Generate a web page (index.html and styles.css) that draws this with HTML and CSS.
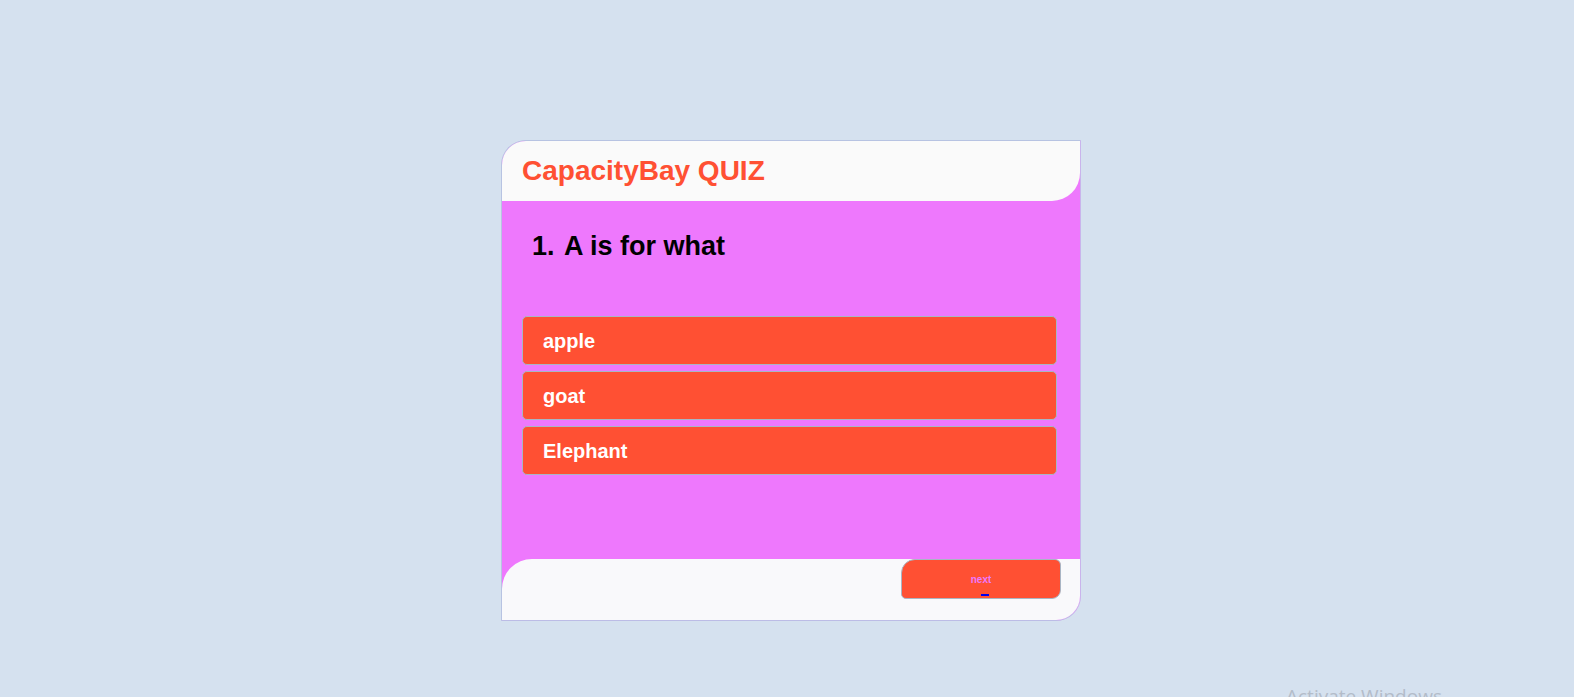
FILE: index.html
```
<!DOCTYPE html>
<html lang="en">
<head>
<meta charset="utf-8">
<title>CapacityBay QUIZ</title>
<link rel="stylesheet" href="styles.css">
</head>
<body>
<div class="quiz">
  <header class="quiz-header">
    <h1 class="quiz-title">CapacityBay QUIZ</h1>
  </header>
  <main class="quiz-body">
    <h2 class="question"><span class="q-num">1.</span> A is for what</h2>
    <div class="options">
      <button class="option">apple</button>
      <button class="option">goat</button>
      <button class="option">Elephant</button>
    </div>
  </main>
  <footer class="quiz-footer">
    <button class="next-btn"><span class="next-label">next</span><span class="next-link"></span></button>
  </footer>
</div>
<div class="watermark">Activate Windows</div>
</body>
</html>
```
FILE: styles.css
```
html, body {
  margin: 0;
  padding: 0;
  height: 697px;
  overflow: hidden;
}
body {
  background: #d5e1ef;
  font-family: "Liberation Sans", Arial, sans-serif;
}
.quiz {
  width: 578px;
  margin: 140px 0 0 501px;
  background: #ee78fd;
  border: 1px solid #b7c3e2;
  border-right-color: #c9b4ec;
  border-bottom-color: #bcbce6;
  border-radius: 25px 0 25px 0;
  overflow: hidden;
  display: flex;
  flex-direction: column;
}
.quiz-header {
  height: 60px;
  background: #fafafa;
  border-bottom-right-radius: 28px;
  display: flex;
  align-items: center;
  padding-left: 20px;
}
.quiz-title {
  margin: 0;
  font-size: 28px;
  line-height: 32px;
  font-weight: bold;
  color: #ff5033;
}
.quiz-body {
  height: 358px;
  padding: 30px 23px 0 20px;
  box-sizing: border-box;
}
.question {
  margin: 0 0 54px 10px;
  font-size: 27px;
  line-height: 31px;
  font-weight: bold;
  color: #000;
}
.q-num {
  margin-right: 3px;
}
.options {
  display: flex;
  flex-direction: column;
  gap: 6px;
}
.option {
  height: 49px;
  background: #ff5033;
  border: 1px solid #a9b5c4;
  border-radius: 5px;
  padding: 2px 0 0 20px;
  text-align: left;
  font-family: "Liberation Sans", Arial, sans-serif;
  font-size: 20px;
  font-weight: bold;
  color: #fff;
}
.quiz-footer {
  height: 61px;
  background: #f9f9fb;
  border-top-left-radius: 30px;
  display: flex;
  justify-content: flex-end;
  align-items: flex-start;
  padding-right: 19px;
}
.next-btn {
  width: 160px;
  height: 40px;
  background: #ff5033;
  border: 1px solid #a9b5c4;
  border-radius: 14px 6px 9px 5px;
  padding: 0;
  display: flex;
  flex-direction: column;
  align-items: center;
  font-family: "Liberation Sans", Arial, sans-serif;
}
.next-label {
  margin-top: 14px;
  font-size: 10px;
  line-height: 12px;
  font-weight: bold;
  color: #ee78fd;
}
.next-link {
  margin-top: 8px;
  margin-left: 7px;
  width: 8px;
  height: 2px;
  background: #0000ee;
}
.watermark {
  position: absolute;
  left: 1286px;
  top: 683px;
  font-family: "Open Sans", "Noto Sans", sans-serif;
  font-size: 19px;
  color: #b3bcc9;
  white-space: nowrap;
}
```
